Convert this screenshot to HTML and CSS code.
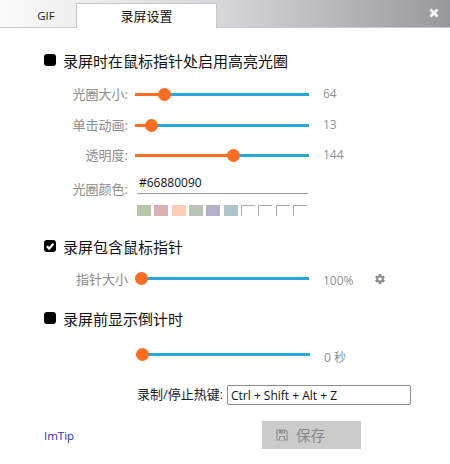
FILE: index.html
```html
<!DOCTYPE html>
<html lang="zh-CN">
<head>
<meta charset="utf-8">
<title>录屏设置</title>
<link rel="stylesheet" href="styles.css">
</head>
<body>
<div class="window">
  <header class="tabbar">
    <div class="tab">GIF</div>
    <div class="tab tab-active">录屏设置</div>
    <svg class="close" viewBox="0 0 10 10" width="10" height="10"><path d="M1.5 1.5 8.500 8.500M8.500 1.500 1.500 8.500" stroke="#fff" stroke-width="2.600" fill="none"/></svg>
  </header>
  <main class="content">
    <label class="check-row first"><span class="box"></span>录屏时在鼠标指针处启用高亮光圈</label>

    <div class="row row-a">
      <span class="label">光圈大小:</span>
      <div class="slider"><div class="fill" style="width:29px"></div><span class="thumb" style="left:23px"></span></div>
      <span class="value">64</span>
    </div>
    <div class="row row-b">
      <span class="label">单击动画:</span>
      <div class="slider"><div class="fill" style="width:16px"></div><span class="thumb" style="left:10px"></span></div>
      <span class="value">13</span>
    </div>
    <div class="row row-c">
      <span class="label">透明度:</span>
      <div class="slider"><div class="fill" style="width:98px"></div><span class="thumb" style="left:92px"></span></div>
      <span class="value">144</span>
    </div>

    <div class="row color-row">
      <span class="label">光圈颜色:</span>
      <div class="color-text">#66880090</div>
    </div>
    <div class="swatches">
      <span class="swatch s1"></span><span class="swatch s2"></span><span class="swatch s3"></span><span class="swatch s4"></span><span class="swatch s5"></span><span class="swatch s6"></span>
      <span class="swatch empty"></span><span class="swatch empty"></span><span class="swatch empty"></span><span class="swatch empty"></span>
    </div>

    <label class="check-row second"><span class="box checked"><svg viewBox="0 0 12 12" width="12" height="12"><path d="M2.800 6.200 5.200 8.600 9.400 3.800" stroke="#fff" stroke-width="2.200" fill="none"/></svg></span>录屏包含鼠标指针</label>

    <div class="row row-pointer">
      <span class="label label-flat">指针大小</span>
      <div class="slider"><div class="fill" style="width:6px"></div><span class="thumb" style="left:0"></span></div>
      <span class="value low">100%</span>
      <svg class="gear" viewBox="0 0 24 24" width="12" height="12"><path fill="#8c8c8c" d="M19.400 13a7.500 7.500 0 0 0 0-2l2.400-1.900-2.400-4.200-2.900 1.200a7.500 7.500 0 0 0-1.700-1L14.400 2H9.600l-.4 3.100a7.500 7.500 0 0 0-1.700 1L4.600 4.900 2.200 9.100 4.600 11a7.500 7.500 0 0 0 0 2l-2.400 1.900 2.400 4.200 2.900-1.200a7.500 7.500 0 0 0 1.700 1l.4 3.100h4.800l.4-3.100a7.500 7.500 0 0 0 1.700-1l2.900 1.200 2.400-4.200zM12 15.500a3.500 3.500 0 1 1 0-7 3.500 3.500 0 0 1 0 7z"/></svg>
    </div>

    <label class="check-row third"><span class="box"></span>录屏前显示倒计时</label>

    <div class="row row-count">
      <span class="label"></span>
      <div class="slider shifted"><div class="fill" style="width:6px"></div><span class="thumb" style="left:0"></span></div>
      <span class="value low">0 秒</span>
    </div>

    <div class="hotkey-row">
      <span class="hotkey-label">录制/停止热键:</span>
      <input class="hotkey" type="text" value="Ctrl + Shift + Alt + Z">
    </div>

    <footer class="footer">
      <a class="link">ImTip</a>
      <button class="save" type="button">
        <svg viewBox="0 0 12 12" width="12" height="12"><path fill="none" stroke="#8f8f8f" stroke-width="1.200" d="M1 1h8.500L11 2.500V11H1z"/><path fill="#8f8f8f" d="M3 1h6v3.500H3zM3 7h6v4H3z"/><path fill="#ccc" d="M6.800 1.800h1.200v2H6.800zM4 8h4v3H4z"/></svg>
        <span class="save-text">保存</span>
      </button>
    </footer>
  </main>
</div>
</body>
</html>
```
FILE: styles.css
```css
* { box-sizing: border-box; }
html, body { margin: 0; padding: 0; background: #fff; }
body { font-family: "Open Sans", "Noto Sans CJK SC", sans-serif; }
.window { width: 450px; height: 464px; overflow: hidden; background: #fff; }

.tabbar {
  position: relative;
  display: flex;
  align-items: flex-end;
  height: 28px;
  background: linear-gradient(90deg, #fbfbfb 0%, #d6d6d8 50%, #98989c 100%);
  border-bottom: 1px solid #c9c9d2;
}
.tab {
  width: 76px;
  height: 24px;
  margin-bottom: -1px;
  font-size: 11.5px;
  line-height: 24px;
  text-align: center;
  color: #222;
  padding-left: 16px;
}
.tab-active {
  width: 141px;
  height: 25px;
  padding-left: 0;
  background: #fff;
  border: 1px solid #c6c6ce;
  border-bottom: 0;
  font-size: 13px;
  color: #111;
}
.close { position: absolute; right: 11px; top: 8px; }

.content { display: flex; flex-direction: column; padding-left: 44px; }

.check-row {
  display: flex;
  align-items: center;
  gap: 7px;
  height: 20px;
  font-size: 15px;
  color: #111;
}
.first { margin-top: 22px; }
.second { margin-top: 20px; }
.third { margin-top: 20px; }
.box {
  display: flex;
  width: 12px;
  height: 12px;
  border-radius: 3px;
  background: #000;
}

.row { display: flex; align-items: center; height: 19px; }
.row-a { margin-top: 15px; }
.row-b { margin-top: 12px; }
.row-c { margin-top: 11px; }
.label {
  width: 84px;
  padding-bottom: 2px;
  text-align: right;
  font-size: 13px;
  color: #8c8c8c;
}
.label-flat { padding-bottom: 0; }
.slider {
  position: relative;
  width: 174px;
  height: 3px;
  margin-left: 7px;
  background: #23aad8;
}
.shifted { margin-left: 8px; }
.fill { height: 100%; background: #ff6d22; }
.thumb {
  position: absolute;
  top: -5px;
  width: 13px;
  height: 13px;
  border-radius: 50%;
  background: #ff6d22;
}
.value {
  margin-left: 14px;
  padding-bottom: 3px;
  font-size: 12px;
  color: #8f8f99;
}
.low { position: relative; top: 2px; padding-bottom: 0; }

.color-row { margin-top: 15px; }
.color-text {
  width: 171px;
  height: 19px;
  margin-left: 9px;
  padding-left: 2px;
  margin-top: -5px;
  font-size: 12px;
  line-height: 16px;
  color: #111;
  border-bottom: 1px solid #999;
  align-self: flex-start;
}
.swatches { display: flex; margin: 6px 0 0 93px; height: 11px; gap: 3.33px; }
.swatch { width: 14px; height: 11px; }
.s1 { background: #b9c4a9; }
.s2 { background: #d9b0b2; }
.s3 { background: #fdcdb9; }
.s4 { background: #b9c4b9; }
.s5 { background: #b5b0ca; }
.s6 { background: #afc6c8; }
.empty { border-top: 1px solid #aaa; border-left: 1px solid #aaa; }

.row-pointer { margin-top: 13px; }
.gear { margin-left: 20px; }
.row-count { margin-top: 17px; }

.hotkey-row { display: flex; align-items: center; justify-content: flex-start; height: 20px; margin: 21px 0 0 93px; }
.hotkey-label { width: 85px; margin-right: 5px; padding-bottom: 3px; font-size: 13px; color: #222; white-space: nowrap; overflow: hidden; }
.hotkey {
  width: 184px;
  height: 20px;
  padding: 0 3px;
  font-family: inherit;
  font-size: 12px;
  color: #111;
  background: #fff;
  border: 1px solid #8c8c8c;
  border-radius: 2px;
  outline: 0;
}

.footer { display: flex; align-items: center; height: 28px; margin-top: 16px; }
.link { width: 218px; font-size: 11.5px; color: #2a2ac0; }
.save {
  display: flex;
  align-items: center;
  gap: 8px;
  width: 99px;
  height: 28px;
  padding: 0 0 0 14px;
  border: 0;
  background: #cbcbcb;
  font-family: inherit;
  font-size: 14.5px;
  color: #888;
}
.save-text { padding-bottom: 2px; }
```
